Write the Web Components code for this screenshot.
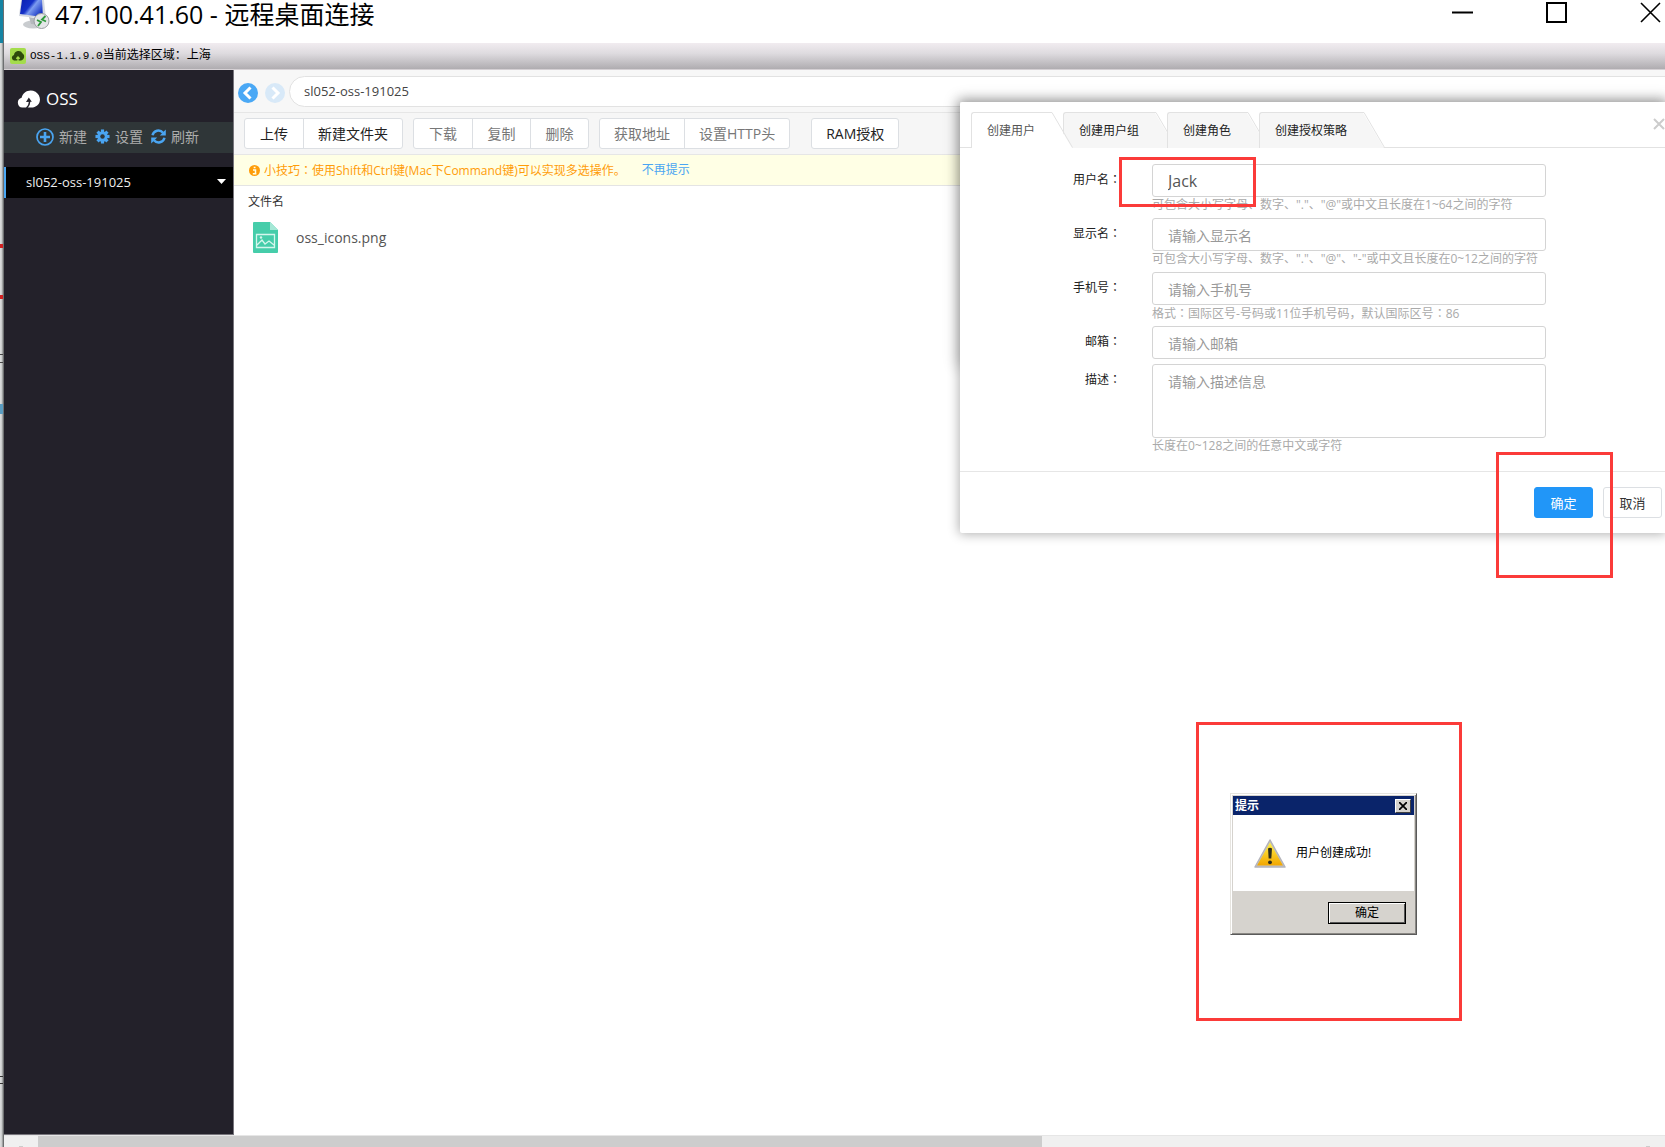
<!DOCTYPE html>
<html lang="zh-CN">
<head>
<meta charset="utf-8">
<title>47.100.41.60 - 远程桌面连接</title>
<style>
html,body{margin:0;height:100%}
body{font:12px/18px "Open Sans","Noto Sans CJK SC",sans-serif;color:#333;background:#fff;overflow:hidden}
</style>
</head>
<body>
<remote-desktop></remote-desktop>
<script>
const BASE = `*{box-sizing:border-box}button,input,textarea{font:inherit;margin:0}button{cursor:pointer}svg{display:block}`;
function define(name, css, html, extra) {
  const t = document.createElement('template');
  t.innerHTML = `<style>${BASE}${css}</style>${html}`;
  customElements.define(name, class extends HTMLElement {
    constructor() {
      super();
      this.attachShadow({mode: 'open'}).appendChild(t.content.cloneNode(true));
    }
    connectedCallback() { if (extra) extra(this, this.shadowRoot); }
  });
}

/* Outer window of the remote session */
define('remote-title', `
:host{display:flex;align-items:flex-start;height:43px;background:#fff;color:#000;padding:0 4px 0 13px;flex:none}
h1{margin:0 0 0 4px;font-size:25px;line-height:28px;font-weight:400;white-space:nowrap;flex:1}
nav{display:flex;gap:73px;padding-top:2px}
button{border:0;background:none;padding:0;width:21px;height:21px}
`, `
<svg width="34" height="30" viewBox="0 0 34 30"><defs><linearGradient id="s" x1="0" x2="1" y1="0" y2=".6"><stop offset="0" stop-color="#0a1fb0"/><stop offset=".45" stop-color="#1430c8"/><stop offset=".6" stop-color="#7d9cf0"/><stop offset="1" stop-color="#1a37c4"/></linearGradient></defs>
<ellipse cx="16" cy="24.500" rx="10" ry="4" fill="#c9cccf"/><path d="M12 17l10 2 1 6-9-1z" fill="#b5b9bd"/><path d="M4 0h23l2 19L2 16z" fill="#d5d9e2"/><path d="M5 0h20l1 17L3 14z" fill="url(#s)"/><circle cx="24.500" cy="21" r="7.500" fill="#e4e6e8" stroke="#9b9ea2"/><path d="M20 20l4 2-3 4M28.500 16l-3.500 3.500 4 2" fill="none" stroke="#2f9a3c" stroke-width="1.800"/></svg>
<h1>47.100.41.60 - 远程桌面连接</h1>
<nav>
<button aria-label="最小化"><svg width="21" height="21"><path d="M0 10.500h21" stroke="#000" stroke-width="2"/></svg></button>
<button aria-label="最大化"><svg width="21" height="21"><path d="M1 1h19v19H1z" fill="none" stroke="#000" stroke-width="2"/></svg></button>
<button aria-label="关闭"><svg width="21" height="21"><path d="M1 1l19 19M20 1L1 20" stroke="#000" stroke-width="1.600"/></svg></button>
</nav>`);

define('app-caption', `
:host{display:flex;align-items:center;gap:4px;height:27px;flex:none;padding-left:6px;background:linear-gradient(#f1ecf0,#dedbdf 40%,#afacb0);color:#000;border-bottom:1px solid #d5d0d4}
.t{font:12px/18px "Liberation Mono","Noto Sans CJK SC",monospace;white-space:nowrap}
.v{font-size:11px}
`, `
<svg width="16" height="16" viewBox="0 0 16 16"><rect width="16" height="16" rx="2" fill="#a4dc4c"/><path d="M4 12.500a2.900 2.900 0 0 1 0-5.600A4.600 4.600 0 0 1 12.600 5.500c2.400 1.500 2.200 6-1.600 7z" fill="#2d4a0c"/><path d="M8 13.500V9.500M6.300 10.800L8 9l1.700 1.800" fill="none" stroke="#a4dc4c" stroke-width="1.300"/></svg>
<span class="t"><span class="v">OSS-1.1.9.0</span>当前选择区域：上海</span>`);

/* Sidebar */
define('side-bar', `
:host{display:flex;flex-direction:column;width:230px;flex:none;background:#23212a;color:#fff;border-right:1px solid #77757c;border-bottom:1px solid #77757c}
.logo{display:flex;align-items:center;gap:5px;height:52px;padding:6px 0 0 13px;font-size:17px;line-height:24px}
.tools{display:flex;align-items:center;height:31px;background:#2f3638;padding:0 0 2px 32px;gap:8px}
.tools button{display:flex;align-items:center;gap:5px;border:0;padding:0;background:none;color:#adadad;font-size:14px;line-height:20px;white-space:nowrap}
.item{display:flex;align-items:center;justify-content:space-between;margin-top:14px;height:31px;background:#000;border-left:2px solid #4aa8f5;padding:0 7px 2px 20px;font-size:13px;line-height:18px;color:#eee;text-decoration:none}
`, `
<div class="logo"><svg width="24" height="18" viewBox="0 0 24 18"><path fill="#fff" d="M5.300 17.500A5 5 0 0 1 4.600 7.700C6 1.500 13-1.500 18.500 1.800 25.500 6.500 24 16 16 17.500z"/><path d="M12 9.500c1 3-.1 6.500-2.500 8.500" fill="none" stroke="#23212a" stroke-width="1.500"/><path d="M11.800 7.500l3 4.200-5.800.3z" fill="#23212a"/></svg><span>OSS</span></div>
<div class="tools">
<button><svg width="18" height="18" viewBox="0 0 18 18" fill="none" stroke="#4aa5f2"><circle cx="9" cy="9" r="8" stroke-width="1.700"/><path d="M9 4v10M4 9h10" stroke-width="2.600"/></svg>新建</button>
<button><svg width="15" height="15" viewBox="-8 -8 16 16" fill="#4aa5f2"><rect x="-1.700" y="-7.500" width="3.400" height="15"/><rect x="-1.700" y="-7.500" width="3.400" height="15" transform="rotate(45)"/><rect x="-1.700" y="-7.500" width="3.400" height="15" transform="rotate(90)"/><rect x="-1.700" y="-7.500" width="3.400" height="15" transform="rotate(135)"/><circle r="5.500"/><circle r="2.400" fill="#2f3638"/></svg>设置</button>
<button><svg width="15" height="15" viewBox="0 0 15 15" fill="none" stroke="#4aa5f2" stroke-width="2.400"><path d="M1.500 6.300A6 6 0 0 1 12 3.800M13.500 8.700A6 6 0 0 1 3 11.200"/><path d="M14.800.5v6H8.800zM.2 14.500v-6h6z" fill="#4aa5f2" stroke="none"/></svg>刷新</button>
</div>
<a class="item" href="#bucket">sl052-oss-191025<svg width="9" height="5"><path d="M0 0h9L4.500 5z" fill="#fff"/></svg></a>`);

/* Address bar */
define('address-bar', `
:host{display:flex;align-items:center;height:43px;background:#f7f7f7;border-bottom:1px solid #e6e6e6;padding-left:4px;gap:7px}
button{border:0;padding:3px 0 0;background:none}
input{flex:1;min-width:0;height:31px;margin:0 -20px 0 -3px;border:1px solid #e2e2e2;border-radius:16px;background:#fff;padding:0 14px;font-size:13px;color:#444;outline:0}
`, `
<button aria-label="后退"><svg width="20" height="20"><circle cx="10" cy="10" r="10" fill="#4aa8f5"/><path d="M12.500 4.500L7 10l5.500 5.500" fill="none" stroke="#fff" stroke-width="3"/></svg></button>
<button aria-label="前进"><svg width="20" height="20"><circle cx="10" cy="10" r="10" fill="#d8e9f8"/><path d="M7.500 4.500L13 10l-5.500 5.500" fill="none" stroke="#fff" stroke-width="3"/></svg></button>
<input aria-label="路径" value="sl052-oss-191025">`);

define('button-group', `
:host{display:flex;height:31px;border:1px solid #dcdfe3;border-radius:3px;background:#fff}
::slotted(tool-button:not(:first-child)){border-left:1px solid #dcdfe3}`, `<slot></slot>`);
define('tool-button', `
:host{display:flex;min-width:58px;color:#222}
:host([off]){color:#777}
button{flex:1;border:0;background:none;color:inherit;padding:0 14px;font-size:14px;line-height:20px;white-space:nowrap}
`, `<button><slot></slot></button>`, (h, r) => { r.querySelector('button').disabled = h.hasAttribute('off'); });

define('tip-bar', `
:host{display:flex;align-items:center;gap:4px;height:31px;background:#ffffe5;border-bottom:1px solid #e4e4e4;padding-left:15px;color:#ff9c08;white-space:nowrap}
a{color:#4aa5f2;text-decoration:none;margin-left:12px}
i{font-style:normal;font-family:"Noto Sans CJK TC",sans-serif}
`, `<svg width="11" height="11" viewBox="0 0 11 11"><circle cx="5.500" cy="5.500" r="5.500" fill="#ff9c08"/><path d="M4 5h2.500v3.500M3.800 8.700h3.600M4.700 2.600h1.800" stroke="#ffffe5" stroke-width="1.500" fill="none"/></svg>
<span>小技巧<i lang="zh-TW">：</i>使用Shift和Ctrl键(Mac下Command键)可以实现多选操作。</span><a href="#hide">不再提示</a>`);

define('file-list', `
:host{display:block}
.h{padding:6px 14px 0;line-height:20px;font-size:12px}
.r{display:flex;align-items:center;gap:18px;padding:10px 19px;font-size:14px;line-height:20px;color:#555}
.r a{color:inherit;text-decoration:none}
`, `<div class="h">文件名</div>
<div class="r"><svg width="25" height="31" viewBox="0 0 25 31"><path d="M1 0h16l8 8v22a1 1 0 0 1-1 1H1a1 1 0 0 1-1-1V1a1 1 0 0 1 1-1z" fill="#46cdaa"/><path d="M17 0l8 8h-8z" fill="#a5e8d6"/><path d="M3.500 12.500h18v13h-18zM4 23l5-5 3 4 4-3 5 4" fill="none" stroke="#d6f6ed" stroke-width="1.300"/><circle cx="8" cy="15.500" r="1.200" fill="#d6f6ed"/></svg><a href="#file">oss_icons.png</a></div>`);

/* Dialog with tabs */
define('dialog-tab', `
:host{display:block;position:relative;height:36px;margin-right:12px}
button{position:relative;height:36px;border:0;background:none;padding:2px 16px 0;color:#222;line-height:18px;white-space:nowrap}
.e{position:absolute;left:0;top:0;width:100%;height:36px;border:1px solid #e2e2e2;border-width:1px 0 0 1px;border-radius:3px 0 0 0;background:#f6f6f6}
svg{position:absolute;left:100%;top:0}
:host([active]){z-index:2}
:host([active]) .e{background:#fff}
:host([active]) path{fill:#fff}
:host([active]) button{color:#555}
path{fill:#f6f6f6}
polyline{fill:none;stroke:#e2e2e2}
`, `<div class="e"></div><svg width="22" height="36"><path d="M0 1L21 36H0z"/><polyline points="-1,.5 1,.5 21.500,35.500"/></svg><button role="tab"><slot></slot></button>`);

define('form-row', `
:host{display:grid;grid-template-columns:161px 1fr;column-gap:31px;min-height:38px;align-items:start}
:host([hint]){min-height:54px}
label{text-align:right;line-height:18px;padding-top:6px;color:#222}
i{font-style:normal;font-family:"Noto Sans CJK TC",sans-serif}
.f{display:flex;flex-direction:column;min-width:0}
input,textarea{display:block;width:100%;height:33px;border:1px solid #d4d4d4;border-radius:3px;padding:0 15px;font-size:16px;line-height:20px;color:#555;background:#fff;resize:none;outline:0}
textarea{height:74px;padding-top:7px}
::placeholder{color:#999;font-size:14px}
p{margin:0;line-height:16px;color:#aaa;white-space:nowrap}
`, `<label for="c"><span></span><i lang="zh-TW">：</i></label><div class="f"></div>`, (h, r) => {
  r.querySelector('span').textContent = h.getAttribute('label');
  const c = document.createElement(h.hasAttribute('multi') ? 'textarea' : 'input');
  c.id = 'c';
  c.placeholder = h.getAttribute('placeholder') || '';
  c.value = h.getAttribute('value') || '';
  r.querySelector('.f').append(c);
  if (h.hasAttribute('hint')) {
    const p = document.createElement('p');
    h.getAttribute('hint').split('：').forEach((s, n) => {
      if (n) { const i = document.createElement('i'); i.lang = 'zh-TW'; i.textContent = '：'; p.append(i); }
      p.append(s);
    });
    r.querySelector('.f').append(p);
  }
});

define('ram-dialog', `
:host{display:block;background:#fff;box-shadow:0 0 12px 1px rgba(0,0,0,.32);border-radius:2px 0 0 2px}
header{display:flex;align-items:flex-end;height:46px;padding-left:11px;border-bottom:1px solid #e2e2e2}
.tabs{display:flex;margin-bottom:-1px;flex:1}
.close{border:0;background:none;padding:0;margin-bottom:17px}
form{padding:16px 119px 0 0}
footer{display:flex;justify-content:flex-end;gap:10px;margin-top:17px;border-top:1px solid #e6e6e6;padding:15px 3px 15px}
footer button{height:31px;min-width:59px;padding:0 14px;border:1px solid #dcdfe3;border-radius:3px;background:#fff;color:#333;font-size:13px;line-height:18px}
footer .ok{background:#2196f8;border-color:#2196f8;color:#fff}
`, `<header><div class="tabs" role="tablist"><dialog-tab active>创建用户</dialog-tab><dialog-tab>创建用户组</dialog-tab><dialog-tab>创建角色</dialog-tab><dialog-tab>创建授权策略</dialog-tab></div>
<button class="close" aria-label="关闭"><svg width="12" height="12"><path d="M1 1l10 10M11 1L1 11" stroke="#ccc" stroke-width="2"/></svg></button></header>
<form>
<form-row label="用户名" value="Jack" hint='可包含大小写字母、数字、"."、"@"或中文且长度在1~64之间的字符'></form-row>
<form-row label="显示名" placeholder="请输入显示名" hint='可包含大小写字母、数字、"."、"@"、"-"或中文且长度在0~12之间的字符'></form-row>
<form-row label="手机号" placeholder="请输入手机号" hint="格式：国际区号-号码或11位手机号码，默认国际区号：86"></form-row>
<form-row label="邮箱" placeholder="请输入邮箱"></form-row>
<form-row multi label="描述" placeholder="请输入描述信息" hint="长度在0~128之间的任意中文或字符"></form-row>
</form>
<footer><button class="ok">确定</button><button>取消</button></footer>`);

/* Classic system message box */
define('message-box', `
:host{display:block;width:187px;padding:2px;background:#d6d3ce;border:1px solid;border-color:#e6e4df #5a5a5a #5a5a5a #e6e4df;color:#000;box-shadow:inset 1px 1px #fff,inset -1px -1px #8a8884}
header{display:flex;align-items:center;justify-content:space-between;height:19px;background:#0a246a;color:#fff;font-weight:700;padding:0 3px 0 2px}
header button{width:16px;height:14px;padding:2px 3px;border:1px solid;border-color:#fff #404040 #404040 #fff;background:#d6d3ce}
.b{display:flex;align-items:center;gap:10px;height:76px;background:#fff;padding-left:21px}
footer{display:flex;justify-content:flex-end;padding:11px 8px 8px}
footer button{width:78px;height:22px;padding:0;background:#d6d3ce;border:1px solid #000;box-shadow:inset 1px 1px #fff,inset -1px -1px #555;line-height:18px;color:#000}
`, `<header>提示<button aria-label="关闭"><svg width="8" height="8"><path d="M0 0l8 8M8 0L0 8" stroke="#000" stroke-width="1.700"/></svg></button></header>
<div class="b"><svg width="32" height="29" viewBox="0 0 32 29"><defs><linearGradient id="w" x2="0" y2="1"><stop offset="0" stop-color="#fff04a"/><stop offset="1" stop-color="#f2a600"/></linearGradient></defs><path d="M16 1L31 28H1z" fill="#c4c4c8" stroke="#b4b4ba" stroke-linejoin="round" stroke-width="1.500"/><path d="M16 3.500L29 26.500H3z" fill="url(#w)"/><path d="M14 9.500q2-1.500 4 0l-.7 10h-2.600z" fill="#2c2c1c"/><circle cx="16" cy="23.300" r="1.900" fill="#2c2c1c"/></svg><span>用户创建成功!</span></div>
<footer><button>确定</button></footer>`);

define('mark-box', `:host{display:block;border:3px solid #fb3b39;pointer-events:none}`, ``);

define('scroll-strip', `
:host{display:flex;height:12px;flex:none;background:#f0f0f0;border-top:1px solid #e6e6e6}
.a{width:34px;display:flex;align-items:flex-end;justify-content:center}
.a::after{content:"";width:4px;height:1px;background:#ccc}
.t{flex:1004;background:#cdcdcd}
.s{flex:589}
`, `<div class="a"></div><div class="t"></div><div class="s"></div><div class="a"></div>`);

define('remote-desktop', `
:host{display:flex;height:100vh;overflow:hidden}
.edge{width:4px;flex:none;border-right:1px solid #6d6f70;background:
 linear-gradient(#1583a3,#1583a3) 0 0/100% 43px no-repeat,
 linear-gradient(#d02020,#d02020) 0 244px/100% 4px no-repeat,
 linear-gradient(#d02020,#d02020) 0 295px/100% 4px no-repeat,
 linear-gradient(#444,#444) 0 354px/100% 1px no-repeat,
 linear-gradient(#444,#444) 0 362px/100% 1px no-repeat,
 linear-gradient(#5a9cc0,#5a9cc0) 0 404px/100% 10px no-repeat,
 linear-gradient(#333,#333) 0 1076px/100% 1px no-repeat,
 linear-gradient(#333,#333) 0 1083px/100% 1px no-repeat,
 linear-gradient(90deg,#d8dada 40%,#8c8e8e)}
.win{flex:1;min-width:0;display:flex;flex-direction:column}
.body{flex:1;display:flex;min-height:0}
main{flex:1;min-width:0;position:relative;background:#fff}
.bar{display:flex;gap:10px;height:42px;padding:5px 10px;background:#f6f6f6;border-bottom:1px solid #e6e6e6}
.bar .last{margin-left:11px}
.behind,ram-dialog,message-box,mark-box{position:absolute}
.behind{left:726px;right:0;top:32px;height:262px;box-shadow:0 0 14px 3px rgba(0,0,0,.2)}
ram-dialog{left:726px;right:0;top:32px}
message-box{left:996px;top:723px}
.m1{left:885px;top:87px;width:137px;height:50px}
.m2{left:1262px;top:382px;width:117px;height:126px}
.m3{left:962px;top:652px;width:266px;height:299px}
`, `<div class="edge"></div>
<div class="win"><remote-title></remote-title><app-caption></app-caption>
<div class="body"><side-bar></side-bar>
<main><address-bar></address-bar>
<div class="bar">
<button-group><tool-button>上传</tool-button><tool-button>新建文件夹</tool-button></button-group>
<button-group><tool-button off>下载</tool-button><tool-button off>复制</tool-button><tool-button off>删除</tool-button></button-group>
<button-group><tool-button off>获取地址</tool-button><tool-button off>设置HTTP头</tool-button></button-group>
<button-group class="last"><tool-button>RAM授权</tool-button></button-group>
</div>
<tip-bar></tip-bar><file-list></file-list>
<div class="behind"></div><ram-dialog></ram-dialog><message-box></message-box>
<mark-box class="m1"></mark-box><mark-box class="m2"></mark-box><mark-box class="m3"></mark-box>
</main></div>
<scroll-strip></scroll-strip></div>`);
</script>
</body>
</html>
